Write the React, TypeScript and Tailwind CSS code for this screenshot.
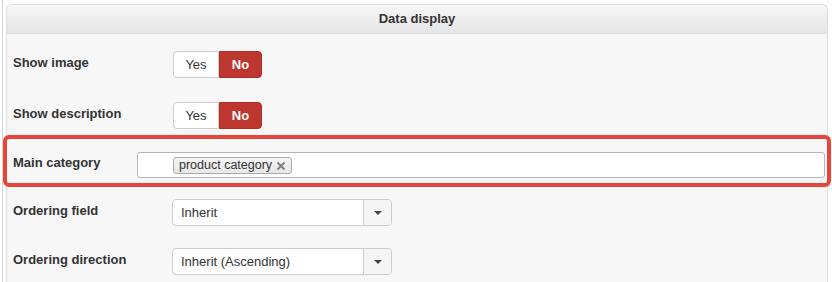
const FONT = { fontFamily: '"Liberation Sans", Arial, sans-serif' }

function Toggle() {
  return (
    <div className="flex h-[27px] text-[13px]">
      <span className="flex w-[46px] items-center justify-center rounded-l-[4px] border border-[#cccccc] bg-white text-[#333]">
        Yes
      </span>
      <span className="flex w-[43px] items-center justify-center rounded-r-[4px] border border-[#b0302a] bg-[#bd362f] font-bold text-white">
        No
      </span>
    </div>
  )
}

function Select({ value }: { value: string }) {
  return (
    <div className="-ml-px flex h-[27px] w-[220px] rounded-[4px] border border-[#cccccc] bg-white text-[13px] text-[#333]">
      <span className="flex flex-1 items-center pl-[8px]">{value}</span>
      <span className="flex w-[28px] items-center justify-center rounded-r-[4px] border-l border-[#cccccc] bg-[#f5f5f5]">
        <span className="h-0 w-0 border-x-[4px] border-t-[4px] border-x-transparent border-t-[#444]" />
      </span>
    </div>
  )
}

function Label({ children, width = 'w-[160px]' }: { children: string; width?: string }) {
  return <span className={`${width} shrink-0 pb-[4px] text-[13px] font-bold text-[#333]`}>{children}</span>
}

export default function App() {
  return (
    <div className="h-[282px] w-[832px] overflow-hidden bg-white" style={FONT}>
      <div className="ml-[2px] h-full border-l border-[#d4d4d4] pt-[4px] pl-[3px]">
        <div className="h-full w-[822px] rounded-t-[6px] border border-b-0 border-[#dcdcdc] bg-[#f7f7f7]">
          <div className="flex h-[29px] items-center justify-center rounded-t-[6px] border-b border-[#e0e0e0] bg-gradient-to-b from-[#f7f7f7] to-[#e5e5e5] text-[13px] font-bold text-[#333]">
            Data display
          </div>

          <div className="mt-[17px] flex items-center px-[6px]">
            <Label>Show image</Label>
            <Toggle />
          </div>

          <div className="mt-[24px] flex items-center px-[6px]">
            <Label>Show description</Label>
            <Toggle />
          </div>

          {/* highlighted row */}
          <div className="relative z-10 -mx-[4px] mt-[6px] flex items-center rounded-[6px] border-4 border-[#e5463c] pt-[13px] pr-[2px] pb-[5px] pl-[6px]">
            <Label width="w-[124px]">Main category</Label>
            <div className="flex h-[26px] flex-1 items-center rounded-[3px] border border-[#b5b5b5] bg-white pl-[35px]">
              <span className="flex h-[17px] items-center gap-[4px] rounded-[3px] border border-[#aaaaaa] bg-gradient-to-b from-[#f4f4f4] to-[#e8e8e8] pr-[5px] pl-[5px] text-[12.5px] text-[#333]">
                product category
                <svg width="10" height="10" viewBox="0 0 10 10" className="mt-px">
                  <path d="M1.5 1.5 L8.5 8.5 M8.5 1.5 L1.5 8.5" stroke="#808080" strokeWidth="2" />
                </svg>
              </span>
            </div>
          </div>

          <div className="mt-[12px] flex items-center px-[6px]">
            <Label>Ordering field</Label>
            <Select value="Inherit" />
          </div>

          <div className="mt-[22px] flex items-center px-[6px]">
            <Label>Ordering direction</Label>
            <Select value="Inherit (Ascending)" />
          </div>
        </div>
      </div>
    </div>
  )
}
